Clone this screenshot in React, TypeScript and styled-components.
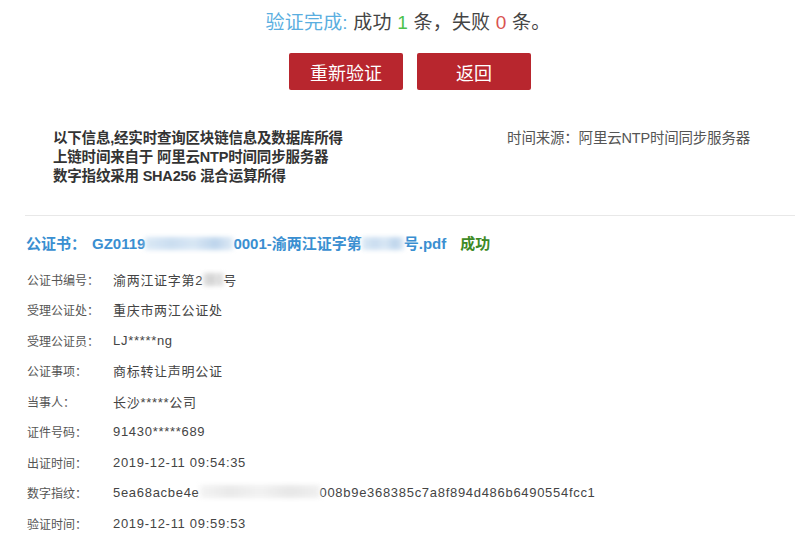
import React from "react";
import styled, { createGlobalStyle } from "styled-components";

const GlobalStyle = createGlobalStyle`
  html, body {
    margin: 0;
    padding: 0;
    background: #ffffff;
  }
  body {
    font-family: "Liberation Sans", "Noto Sans CJK SC", sans-serif;
    color: #333;
  }
`;

interface Field {
  label: string;
  value: React.ReactNode;
}

const Page = styled.div`
  width: 800px;
  height: 541px;
  overflow: hidden;
  box-sizing: border-box;
  padding: 11px 5px 0 25px;
`;

const Summary = styled.div`
  display: flex;
  flex-direction: column;
  align-items: center;
`;

const Title = styled.div`
  font-size: 19px;
  line-height: 24px;
  color: #444;
  letter-spacing: 0.2px;
  padding-right: 4px;
`;

const Accent = styled.span<{ $color: string }>`
  color: ${(p) => p.$color};
`;

const Buttons = styled.div`
  display: flex;
  gap: 14px;
  margin-top: 18px;
`;

const Button = styled.button`
  width: 114px;
  height: 37px;
  border: none;
  border-radius: 2px;
  background: #b8262e;
  color: #fff;
  font-family: "Liberation Sans", "Noto Sans CJK SC", sans-serif;
  font-size: 18px;
  cursor: pointer;
  padding: 0;
`;

const Info = styled.div`
  display: flex;
  justify-content: space-between;
  margin-top: 39px;
  padding: 0 45px 0 28px;
`;

const Notes = styled.div`
  font-size: 14.5px;
  font-weight: bold;
  line-height: 19px;
  color: #333;
  letter-spacing: -0.2px;
`;

const Source = styled.div`
  font-size: 14.5px;
  line-height: 19px;
  color: #555;
  letter-spacing: -0.2px;
`;

const Divider = styled.hr`
  border: none;
  border-top: 1px solid #e8e8e8;
  margin: 29px 0 0;
`;

const Heading = styled.div`
  margin-top: 18px;
  padding-left: 1px;
  font-size: 15px;
  font-weight: bold;
  line-height: 20px;
  color: #3a8fd1;
  white-space: nowrap;
`;

const Gap = styled.span`
  display: inline-block;
  width: 6px;
`;

const Status = styled.span`
  color: #3e8a26;
  margin-left: 14px;
`;

const Blur = styled.span<{ $w: number; $tone: string }>`
  display: inline-block;
  width: ${(p) => p.$w}px;
  height: 13px;
  vertical-align: -1px;
  background: ${(p) => p.$tone};
  filter: blur(2px);
  opacity: 0.85;
`;

const Rows = styled.div`
  margin-top: 10px;
  padding-left: 2px;
`;

const Row = styled.div`
  display: flex;
  align-items: center;
  height: 30.5px;
`;

const Label = styled.div`
  width: 86px;
  flex-shrink: 0;
  font-size: 12px;
  color: #555;
`;

const Value = styled.div`
  font-size: 13px;
  color: #444;
  letter-spacing: 0.7px;
  white-space: nowrap;
`;

const blueTone =
  "linear-gradient(90deg, #d6e6f4 0%, #c2d8ee 30%, #d2e3f3 55%, #b3cee9 80%, #d9e7f4 100%)";
const greyTone =
  "linear-gradient(90deg, #e0e0e0 0%, #cbcbcb 40%, #dedede 70%, #d0d0d0 100%)";
const lightTone =
  "linear-gradient(90deg, #f2f2f2 0%, #e6e6e6 25%, #f0f0f0 50%, #e3e3e3 75%, #eeeeee 100%)";

const fields: Field[] = [
  {
    label: "公证书编号：",
    value: (
      <>
        渝两江证字第2
        <Blur $w={20} $tone={greyTone} />号
      </>
    ),
  },
  { label: "受理公证处：", value: "重庆市两江公证处" },
  { label: "受理公证员：", value: "LJ*****ng" },
  { label: "公证事项：", value: "商标转让声明公证" },
  { label: "当事人：", value: "长沙*****公司" },
  { label: "证件号码：", value: "91430*****689" },
  { label: "出证时间：", value: "2019-12-11 09:54:35" },
  {
    label: "数字指纹：",
    value: (
      <>
        5ea68acbe4e
        <Blur $w={120} $tone={lightTone} />
        008b9e368385c7a8f894d486b6490554fcc1
      </>
    ),
  },
  { label: "验证时间：", value: "2019-12-11 09:59:53" },
];

const App = () => {
  return (
    <Page>
      <GlobalStyle />
      <Summary>
        <Title>
          <Accent $color="#5aaee0">验证完成:</Accent> 成功{" "}
          <Accent $color="#4cc24c">1</Accent> 条，失败{" "}
          <Accent $color="#d9534f">0</Accent> 条。
        </Title>
        <Buttons>
          <Button>重新验证</Button>
          <Button>返回</Button>
        </Buttons>
      </Summary>

      <Info>
        <Notes>
          以下信息,经实时查询区块链信息及数据库所得
          <br />
          上链时间来自于 阿里云NTP时间同步服务器
          <br />
          数字指纹采用 SHA256 混合运算所得
        </Notes>
        <Source>时间来源：阿里云NTP时间同步服务器</Source>
      </Info>

      <Divider />

      <Heading>
        公证书：<Gap />GZ0119
        <Blur $w={88} $tone={blueTone} />
        0001-渝两江证字第
        <Blur $w={42} $tone={blueTone} />
        号.pdf
        <Status>成功</Status>
      </Heading>

      <Rows>
        {fields.map((f) => (
          <Row key={f.label}>
            <Label>{f.label}</Label>
            <Value>{f.value}</Value>
          </Row>
        ))}
      </Rows>
    </Page>
  );
};

export default App;
